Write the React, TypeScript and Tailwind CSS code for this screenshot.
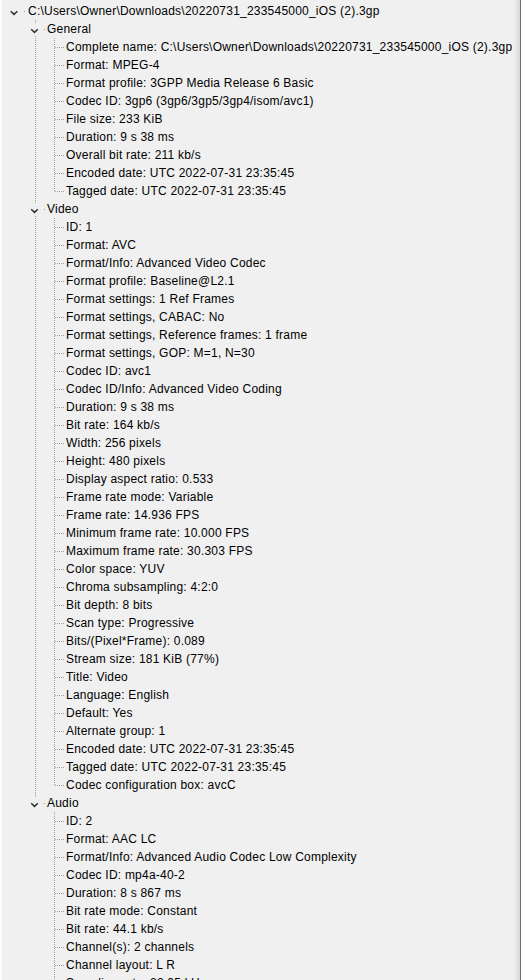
import React from "react";

type Item = { label: string; children?: Item[] };

const general: string[] = [
  "Complete name: C:\\Users\\Owner\\Downloads\\20220731_233545000_iOS (2).3gp",
  "Format: MPEG-4",
  "Format profile: 3GPP Media Release 6 Basic",
  "Codec ID: 3gp6 (3gp6/3gp5/3gp4/isom/avc1)",
  "File size: 233 KiB",
  "Duration: 9 s 38 ms",
  "Overall bit rate: 211 kb/s",
  "Encoded date: UTC 2022-07-31 23:35:45",
  "Tagged date: UTC 2022-07-31 23:35:45",
];

const video: string[] = [
  "ID: 1",
  "Format: AVC",
  "Format/Info: Advanced Video Codec",
  "Format profile: Baseline@L2.1",
  "Format settings: 1 Ref Frames",
  "Format settings, CABAC: No",
  "Format settings, Reference frames: 1 frame",
  "Format settings, GOP: M=1, N=30",
  "Codec ID: avc1",
  "Codec ID/Info: Advanced Video Coding",
  "Duration: 9 s 38 ms",
  "Bit rate: 164 kb/s",
  "Width: 256 pixels",
  "Height: 480 pixels",
  "Display aspect ratio: 0.533",
  "Frame rate mode: Variable",
  "Frame rate: 14.936 FPS",
  "Minimum frame rate: 10.000 FPS",
  "Maximum frame rate: 30.303 FPS",
  "Color space: YUV",
  "Chroma subsampling: 4:2:0",
  "Bit depth: 8 bits",
  "Scan type: Progressive",
  "Bits/(Pixel*Frame): 0.089",
  "Stream size: 181 KiB (77%)",
  "Title: Video",
  "Language: English",
  "Default: Yes",
  "Alternate group: 1",
  "Encoded date: UTC 2022-07-31 23:35:45",
  "Tagged date: UTC 2022-07-31 23:35:45",
  "Codec configuration box: avcC",
];

const audio: string[] = [
  "ID: 2",
  "Format: AAC LC",
  "Format/Info: Advanced Audio Codec Low Complexity",
  "Codec ID: mp4a-40-2",
  "Duration: 8 s 867 ms",
  "Bit rate mode: Constant",
  "Bit rate: 44.1 kb/s",
  "Channel(s): 2 channels",
  "Channel layout: L R",
  "Sampling rate: 22.05 kHz",
  "Frame rate: 21.533 FPS (1024 SPF)",
  "Compression mode: Lossy",
  "Stream size: 46.7 KiB (20%)",
  "Title: Audio",
];

const tree: Item = {
  label: "C:\\Users\\Owner\\Downloads\\20220731_233545000_iOS (2).3gp",
  children: [
    { label: "General", children: general.map((label) => ({ label })) },
    { label: "Video", children: video.map((label) => ({ label })) },
    { label: "Audio", children: audio.map((label) => ({ label })) },
  ],
};

const LINE = "#a0a0a0";

// one 19x18 cell of the tree gutter
function Cell({
  pass,
  own,
  last,
  expander,
  chevX,
  dotX,
}: {
  pass?: boolean;
  own?: boolean;
  last?: boolean;
  expander?: boolean;
  chevX?: number;
  dotX?: number;
}) {
  const cx = chevX ?? 8;
  return (
    <svg width="19" height="18" viewBox="0 0 19 18" className="shrink-0 block" shapeRendering="crispEdges">
      {pass && <line x1="9.5" y1="0" x2="9.5" y2="18" stroke={LINE} strokeDasharray="1 1" />}
      {own && (
        <line x1="9.5" y1="0" x2="9.5" y2={last ? 10 : 18} stroke={LINE} strokeDasharray="1 1" />
      )}
      {own && !expander && <line x1="10" y1="9.5" x2="19" y2="9.5" stroke={LINE} strokeDasharray="1 1" />}
      {expander && (
        <>
          <rect x={cx - 6} y="3" width="13" height="12" fill="#f0f0f0" />
          <polyline
            points={`${cx - 2.8},9.2 ${cx + 0.5},12.4 ${cx + 3.8},9.2`}
            fill="none"
            stroke="#333333"
            strokeWidth="1.5"
            shapeRendering="geometricPrecision"
          />
          <rect x={dotX ?? 17} y="9" width="1" height="1" fill={LINE} />
        </>
      )}
    </svg>
  );
}

function Row({ children, text }: { children: React.ReactNode; text: string }) {
  return (
    <div className="flex h-[18px] items-center whitespace-nowrap">
      {children}
      <span className="ml-[2px] text-[12px] leading-[18px] tracking-[0.22px] text-[#000]">{text}</span>
    </div>
  );
}

export default function App() {
  const groups = tree.children ?? [];
  return (
    <div
      className="flex h-[980px] w-[521px] overflow-hidden bg-[#f0f0f0]"
      style={{ fontFamily: '"Liberation Sans", Arial, sans-serif' }}
    >
      <div className="w-[2px] shrink-0 bg-[#fbfbfb]" />
      <div className="flex-1 pl-[5px] pt-[2px]">
        <Row text={tree.label}>
          <Cell expander chevX={6.5} dotX={17} />
        </Row>
        {groups.map((g, gi) => {
          const lastGroup = gi === groups.length - 1;
          const kids = g.children ?? [];
          return (
            <div key={g.label}>
              <Row text={g.label}>
                <Cell />
                <Cell own last={lastGroup} expander chevX={8} dotX={18} />
              </Row>
              {kids.map((k, ki) => (
                <Row key={g.label + ki} text={k.label}>
                  <Cell />
                  <Cell pass={!lastGroup} />
                  <Cell own last={ki === kids.length - 1} />
                </Row>
              ))}
            </div>
          );
        })}
      </div>
      <div className="w-[6px] shrink-0 bg-gradient-to-r from-[#f0f0f0] to-[#d6d6d6]" />
      <div className="w-px shrink-0 bg-[#6a6a6a]" />
    </div>
  );
}
